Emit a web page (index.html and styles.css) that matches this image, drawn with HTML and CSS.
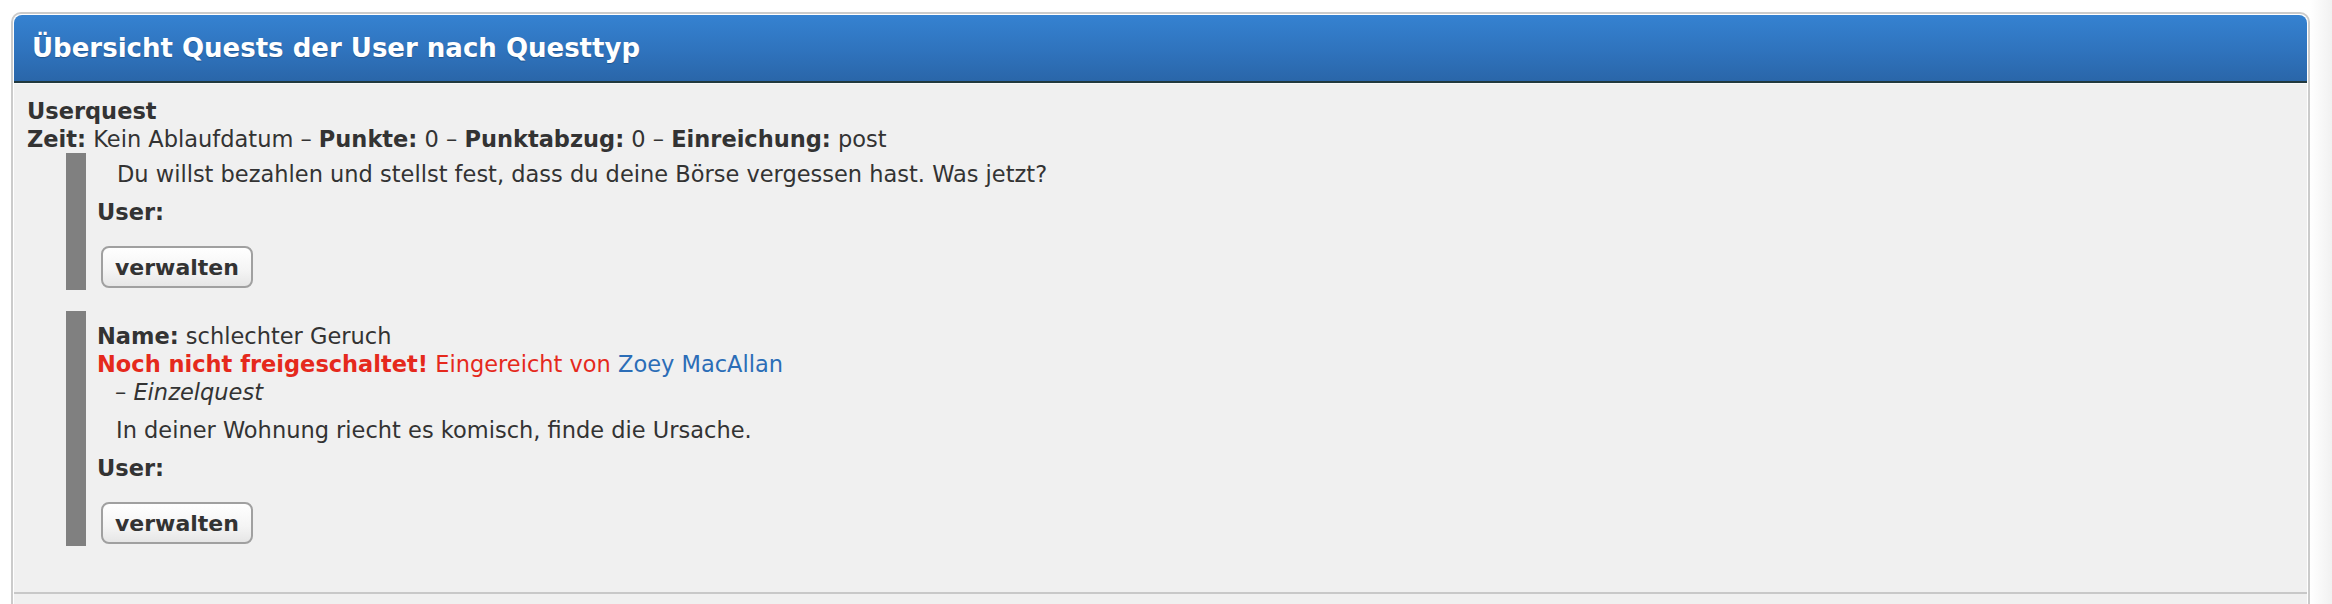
FILE: index.html
```html
<!DOCTYPE html>
<html lang="de">
<head>
<meta charset="utf-8">
<title>Übersicht Quests der User nach Questtyp</title>
<link rel="stylesheet" href="styles.css">
</head>
<body>
<div class="box">
  <div class="box-head">
    <h2 class="box-title">Übersicht Quests der User nach Questtyp</h2>
  </div>
  <div class="box-body">
    <div class="type-name">Userquest</div>
    <div class="meta"><b>Zeit:</b> Kein Ablaufdatum – <b>Punkte:</b> 0 – <b>Punktabzug:</b> 0 – <b>Einreichung:</b> post</div>

    <div class="quest">
      <p class="desc">Du willst bezahlen und stellst fest, dass du deine Börse vergessen hast. Was jetzt?</p>
      <div class="users"><b>User:</b></div>
      <button class="btn" type="button">verwalten</button>
    </div>

    <div class="quest quest-named">
      <div class="line"><b>Name:</b> schlechter Geruch</div>
      <div class="line warn"><b>Noch nicht freigeschaltet!</b> Eingereicht von <a class="user-link" href="#">Zoey MacAllan</a></div>
      <div class="line kind">– <i>Einzelquest</i></div>
      <p class="desc">In deiner Wohnung riecht es komisch, finde die Ursache.</p>
      <div class="users"><b>User:</b></div>
      <button class="btn" type="button">verwalten</button>
    </div>
  </div>
  <div class="box-foot"></div>
</div>
</body>
</html>
```

FILE: styles.css
```css
html {
  background: linear-gradient(90deg, #ffffff 0, #ffffff 2310px, #f1f1f1 2332px);
  min-height: 100%;
}

body {
  margin: 12px 22px 0 11px;
  font-family: "DejaVu Sans", "Liberation Sans", sans-serif;
  font-size: 22.5px;
  line-height: 28px;
  color: #333333;
}

.box {
  background: #ffffff;
  border: 2px solid #cbcbcb;
  border-radius: 10px 10px 0 0;
  padding: 1px 1px 0 1px;
}

.box-head {
  height: 66px;
  background: linear-gradient(180deg, #3582d1 0%, #2f73bd 55%, #2a66a9 100%);
  border-radius: 8px 8px 0 0;
  border-bottom: 2px solid #22393e;
  box-shadow: 0 1px 0 #f8f8f8;
  display: flex;
  align-items: center;
  padding-left: 18px;
}

.box-title {
  margin: 0;
  color: #ffffff;
  font-size: 26px;
  font-weight: bold;
  line-height: 32px;
  text-shadow: 0 1px 1px rgba(0, 0, 0, 0.25);
}

.box-body {
  background: #f0f0f0;
  margin-top: 1px;
  padding: 13px 14px 46px 13px;
}

.type-name {
  font-weight: bold;
}

.quest {
  margin: 0 0 21px 39px;
  border-left: 20px solid #808080;
  padding: 7px 0 2px 11px;
}

.quest:last-child {
  margin-bottom: 0;
}

.quest-named {
  padding-top: 11px;
}

.desc {
  margin: 0 0 10px 0;
  padding-left: 20px;
}

.quest-named .desc {
  margin-top: 10px;
  padding-left: 19px;
}

.kind {
  padding-left: 18px;
}

.warn {
  color: #e5291c;
}

.user-link {
  color: #2b6db7;
  text-decoration: none;
}

.users {
  margin-bottom: 20px;
}

.btn {
  display: block;
  height: 42px;
  margin-left: 4px;
  padding: 0 12px;
  font-family: inherit;
  font-size: 22px;
  font-weight: bold;
  color: #333333;
  background: linear-gradient(180deg, #ffffff 0%, #f4f4f4 60%, #e6e6e6 100%);
  border: 2px solid #a0a0a0;
  border-radius: 8px;
}

.box-foot {
  height: 20px;
  background: #f0f0f0;
  border-top: 2px solid #c8c8c8;
}
```
